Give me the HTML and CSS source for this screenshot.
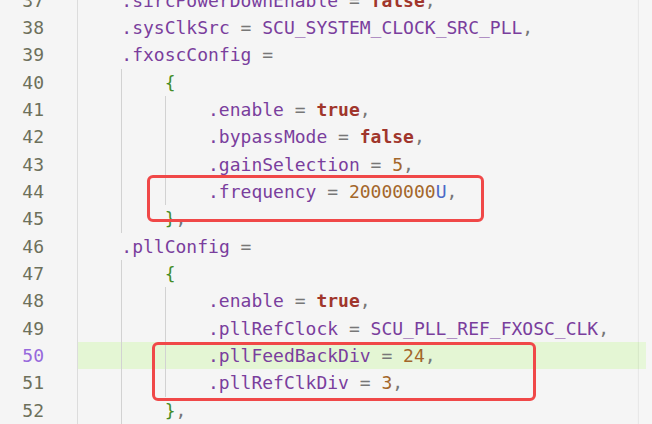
FILE: index.html
```html
<!DOCTYPE html>
<html>
<head>
<meta charset="utf-8">
<link rel="stylesheet" href="styles.css">
</head>
<body>
<div class="editor">
  <div class="gutter">
    <div class="num">37</div>
    <div class="num">38</div>
    <div class="num">39</div>
    <div class="num">40</div>
    <div class="num">41</div>
    <div class="num">42</div>
    <div class="num">43</div>
    <div class="num">44</div>
    <div class="num">45</div>
    <div class="num">46</div>
    <div class="num">47</div>
    <div class="num">48</div>
    <div class="num">49</div>
    <div class="num active">50</div>
    <div class="num">51</div>
    <div class="num">52</div>
  </div>
  <div class="code">
    <div class="line"><span class="ig"></span><span class="p">.sircPowerDownEnable</span><span class="o"> = </span><span class="k">false</span><span class="o">,</span></div>
    <div class="line"><span class="ig"></span><span class="p">.sysClkSrc</span><span class="o"> = </span><span class="p">SCU_SYSTEM_CLOCK_SRC_PLL</span><span class="o">,</span></div>
    <div class="line"><span class="ig"></span><span class="p">.fxoscConfig</span><span class="o"> =</span></div>
    <div class="line"><span class="ig"></span><span class="ig g"></span><span class="b">{</span></div>
    <div class="line"><span class="ig"></span><span class="ig g"></span><span class="ig g"></span><span class="p">.enable</span><span class="o"> = </span><span class="k">true</span><span class="o">,</span></div>
    <div class="line"><span class="ig"></span><span class="ig g"></span><span class="ig g"></span><span class="p">.bypassMode</span><span class="o"> = </span><span class="k">false</span><span class="o">,</span></div>
    <div class="line"><span class="ig"></span><span class="ig g"></span><span class="ig g"></span><span class="p">.gainSelection</span><span class="o"> = </span><span class="n">5</span><span class="o">,</span></div>
    <div class="line"><span class="ig"></span><span class="ig g"></span><span class="ig g"></span><span class="p">.frequency</span><span class="o"> = </span><span class="n">20000000</span><span class="u">U</span><span class="o">,</span></div>
    <div class="line"><span class="ig"></span><span class="ig g"></span><span class="b">}</span><span class="o">,</span></div>
    <div class="line"><span class="ig"></span><span class="p">.pllConfig</span><span class="o"> =</span></div>
    <div class="line"><span class="ig"></span><span class="ig g"></span><span class="b">{</span></div>
    <div class="line"><span class="ig"></span><span class="ig g"></span><span class="ig g"></span><span class="p">.enable</span><span class="o"> = </span><span class="k">true</span><span class="o">,</span></div>
    <div class="line"><span class="ig"></span><span class="ig g"></span><span class="ig g"></span><span class="p">.pllRefClock</span><span class="o"> = </span><span class="p">SCU_PLL_REF_FXOSC_CLK</span><span class="o">,</span></div>
    <div class="line hl"><span class="ig"></span><span class="ig g"></span><span class="ig g"></span><span class="p">.pllFeedBackDiv</span><span class="o"> = </span><span class="n">24</span><span class="o">,</span></div>
    <div class="line"><span class="ig"></span><span class="ig g"></span><span class="ig g"></span><span class="p">.pllRefClkDiv</span><span class="o"> = </span><span class="n">3</span><span class="o">,</span></div>
    <div class="line"><span class="ig"></span><span class="ig g"></span><span class="b">}</span><span class="o">,</span></div>
  </div>
  <div class="scroll"></div>
  <div class="mark mark1"></div>
  <div class="mark mark2"></div>
</div>
</body>
</html>
```

FILE: styles.css
```css
html, body {
  margin: 0;
  padding: 0;
  background: #f5f5f5;
  overflow: hidden;
}
.editor {
  position: relative;
  width: 652px;
  height: 424px;
  overflow: hidden;
  display: flex;
  font-family: "DejaVu Sans Mono", "Liberation Mono", monospace;
  font-size: 18px;
  background: #f5f5f5;
}
.gutter {
  width: 77px;
  flex: none;
  box-sizing: border-box;
  padding-right: 33px;
  margin-top: -13.4px;
  text-align: right;
  color: #6d705b;
}
.num {
  height: 27.33px;
  line-height: 27.33px;
}
.num.active {
  color: #9769dc;
}
.code {
  flex: 1;
  margin-top: -13.4px;
  margin-right: 6px;
  border-left: 1px solid #dcdcdc;
}
.line {
  height: 27.33px;
  line-height: 27.33px;
  white-space: pre;
}
.line.hl {
  background: #e4f6d4;
}
.ig {
  display: inline-block;
  width: 4ch;
  height: 27.33px;
  vertical-align: top;
}
.ig.g {
  box-shadow: inset 1px 0 0 #d2d2d2;
}
.p { color: #7a3e9d; }
.o { color: #777777; }
.k { color: #a0362c; font-weight: bold; }
.n { color: #a3662a; }
.u { color: #4b69c6; }
.b { color: #448c27; }
.scroll {
  position: absolute;
  top: 0;
  right: 0;
  width: 13px;
  height: 100%;
  background: rgba(255, 255, 255, 0.12);
  box-shadow: -1px 0 1px rgba(0, 0, 0, 0.05);
}
.mark {
  position: absolute;
  box-sizing: border-box;
  border: 3px solid #f04848;
  border-radius: 6px;
}
.mark1 {
  left: 147px;
  top: 175px;
  width: 337px;
  height: 47px;
}
.mark2 {
  left: 152px;
  top: 342px;
  width: 384px;
  height: 59px;
}
```
